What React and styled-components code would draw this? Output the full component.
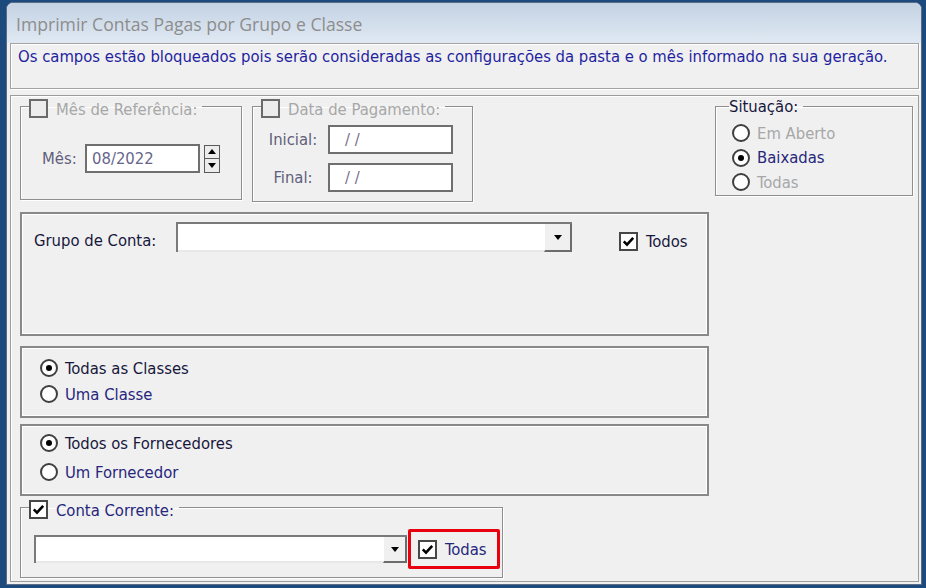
import React from "react";
import styled, { createGlobalStyle } from "styled-components";

const Global = createGlobalStyle`
  html, body { margin: 0; padding: 0; }
  body {
    width: 926px; height: 588px; overflow: hidden;
    background: #1d4a7d;
    font-family: "DejaVu Sans Condensed", "Liberation Sans", sans-serif;
  }
`;

const Screen = styled.div`
  width: 926px; height: 588px; box-sizing: border-box;
  background: #1d4a7d;
  padding: 2px 4px 3px 6px;
  display: flex;
`;

const Window = styled.div`
  flex: 1;
  display: flex; flex-direction: column;
  background: #f0f0f0;
  border: 1px solid #5a6c86;
  border-radius: 7px 7px 0 0;
  overflow: hidden;
`;

const TitleBar = styled.div`
  height: 40px; flex: none;
  display: flex; align-items: center;
  padding: 2px 0 0 9px; box-sizing: border-box;
  background: linear-gradient(#c3d2e3, #e0e9f3);
`;

const TitleText = styled.span`
  font-family: "Open Sans", "Noto Sans", sans-serif;
  font-size: 17.6px; line-height: 22px;
  color: #8d8d8d;
`;

const Body = styled.div`
  flex: 1; display: flex; flex-direction: column;
  padding: 0 2px 2px 3px;
`;

const InfoBox = styled.div`
  height: 46px; box-sizing: border-box; flex: none;
  border: 1px solid #a3a3a3;
  box-shadow: inset 1px 1px 0 #fff, 1px 1px 0 #fff;
  padding: 3px 7px;
  font-size: 16.5px; line-height: 19px;
  color: #1f1fa0;
  white-space: nowrap;
`;

const Panel = styled.div`
  flex: 1; margin-top: 6px;
  border: 1px solid #9c9c9c;
  box-shadow: inset 1px 1px 0 #fff;
  padding: 3px 4px 0 9px;
  display: grid;
  grid-template-columns: 689px 198px;
  column-gap: 6px;
  align-items: start;
`;

const LeftCol = styled.div`
  display: flex; flex-direction: column;
`;

const TopRow = styled.div`
  display: flex; gap: 10px; align-items: flex-start;
`;

const Group = styled.fieldset`
  margin: 0; min-width: 0;
  width: ${p => p.$w}px; box-sizing: border-box;
  border: 1px solid #8e8e8e;
  box-shadow: inset 1px 1px 0 #fff, 1px 1px 0 #fff;
  padding: ${p => p.$pad};
  margin-top: ${p => p.$mt || 0}px;
`;

const Legend = styled.legend`
  padding: 0 5px 0 0;
  margin-left: ${p => p.$ml || 0}px;
`;

const LegendInner = styled.span`
  display: flex; align-items: flex-start; gap: 8px;
  height: 14px;
`;

const Text = styled.span`
  font-size: 16.5px; line-height: 19px; white-space: nowrap;
  margin-top: ${p => p.$mt || 0}px;
  color: ${p =>
    p.$tone === "muted" ? "#a7a7a7" :
    p.$tone === "field" ? "#5f5f7c" :
    p.$tone === "navy" ? "#26267c" :
    "#17173c"};
`;

const FieldRow = styled.div`
  display: flex; align-items: center;
  margin-left: ${p => p.$ml || 0}px;
  & + & { margin-top: ${p => p.$gap || 0}px; }
`;

const FieldLabel = styled(Text)`
  width: ${p => p.$w}px;
  text-align: ${p => p.$align || "left"};
  margin-right: ${p => p.$mr || 0}px;
`;

const TextField = styled.div`
  width: ${p => p.$w}px; height: 29px; box-sizing: border-box;
  border: 2px solid #6f6f6f;
  background: #fff;
  padding-left: ${p => p.$pad}px;
  display: flex; align-items: center;
  font-size: 16.5px; color: ${p => p.$color || "#66668a"};
`;

const Spinner = styled.div`
  display: flex; flex-direction: column;
  width: 16px; height: 28px; box-sizing: border-box;
  border: 1px solid #5a5a5a;
  margin-left: 4px;
`;

const SpinBtn = styled.span`
  flex: 1; display: flex; align-items: center; justify-content: center;
  background: #ececec;
  & + & { border-top: 1px solid #5a5a5a; }
`;

const Arrow = styled.span`
  width: 0; height: 0;
  border-left: ${p => p.$s}px solid transparent;
  border-right: ${p => p.$s}px solid transparent;
  ${p => p.$up
    ? `border-bottom: ${p.$h}px solid #000;`
    : `border-top: ${p.$h}px solid #000;`}
`;

const Box = styled.div`
  height: ${p => p.$h}px; box-sizing: border-box;
  margin-top: ${p => p.$mt}px;
  border: 2px solid #888;
  box-shadow: inset 1px 1px 0 #fff, inset -1px -1px 0 #fff;
  padding: ${p => p.$pad};
`;

const GrupoRow = styled.div`
  display: flex; align-items: flex-start;
`;

const Combo = styled.div`
  display: flex; flex: none;
  width: ${p => p.$w}px; height: ${p => p.$h}px; box-sizing: border-box;
  border-top: 2px solid #7a7a7a; border-left: 2px solid #7a7a7a;
  background: #fff;
  margin-left: ${p => p.$ml || 0}px;
`;

const ComboText = styled.div`
  flex: 1; border-bottom: 2px solid #e8e8e8;
`;

const DropBtn = styled.div`
  width: ${p => p.$w}px; box-sizing: border-box;
  display: flex; align-items: center; justify-content: center;
  background: #f0f0f0;
  border-right: 2px solid #6c6c6c; border-bottom: 2px solid #6c6c6c;
  border-left: 1px solid #fff;
`;

const CheckOption = styled.div`
  display: flex; align-items: center; gap: 8px;
  margin-left: ${p => p.$ml || 0}px;
  margin-top: ${p => p.$mt || 0}px;
`;

const CheckBox = styled.span`
  flex: none;
  width: 19px; height: 19px; box-sizing: border-box;
  border: 2px solid ${p => (p.$disabled ? "#6a6a6a" : "#474747")};
  background: ${p => (p.$disabled ? "#ececec" : "#fff")};
  display: inline-flex; align-items: center; justify-content: center;
`;

const OptionList = styled.div`
  display: flex; flex-direction: column;
  gap: ${p => p.$gap}px;
  padding-left: ${p => p.$pl || 0}px;
`;

const OptionRow = styled.div`
  display: flex; align-items: center; gap: 7px; height: 20px;
`;

const RadioDot = styled.span`
  flex: none; width: 18px; height: 18px; box-sizing: border-box;
  border-radius: 50%;
  border: 2px solid #3f3f3f;
  background: #fff;
  display: inline-flex; align-items: center; justify-content: center;
  &::after {
    content: "";
    width: 6px; height: 6px; border-radius: 50%;
    background: #000;
    display: ${p => (p.$on ? "block" : "none")};
  }
`;

const ContaRow = styled.div`
  display: flex; align-items: center; gap: 1px;
  margin-left: 5px;
`;

const Highlight = styled.div`
  width: 92px; height: 40px; box-sizing: border-box;
  border: 3px solid #e8000e;
  border-radius: 2px;
  display: flex; align-items: center; gap: 8px;
  padding-left: 7px;
`;

function Check({ checked, disabled }) {
  return (
    <CheckBox $disabled={disabled}>
      {checked && (
        <svg width="13" height="13" viewBox="0 0 13 13">
          <path d="M1.8 6.4 L5 9.6 L11.2 2.8" fill="none" stroke="#000" strokeWidth="2.6" />
        </svg>
      )}
    </CheckBox>
  );
}

function Radio({ on, label, tone }) {
  return (
    <OptionRow>
      <RadioDot $on={on} />
      <Text $tone={tone}>{label}</Text>
    </OptionRow>
  );
}

export default function App() {
  return (
    <>
      <Global />
      <Screen>
        <Window>
          <TitleBar>
            <TitleText>Imprimir Contas Pagas por Grupo e Classe</TitleText>
          </TitleBar>
          <Body>
            <InfoBox>
              Os campos estão bloqueados pois serão consideradas as configurações da pasta e o mês informado na sua geração.
            </InfoBox>
            <Panel>
              <LeftCol>
                <TopRow>
                  <Group $w={222} $pad="31px 8px 26px 8px">
                    <Legend>
                      <LegendInner>
                        <Check disabled />
                        <Text $tone="muted" $mt={1}>Mês de Referência:</Text>
                      </LegendInner>
                    </Legend>
                    <FieldRow $ml={13}>
                      <FieldLabel $tone="field" $w={43}>Mês:</FieldLabel>
                      <TextField $w={115} $pad={5}>08/2022</TextField>
                      <Spinner>
                        <SpinBtn><Arrow $up $s={4} $h={5} /></SpinBtn>
                        <SpinBtn><Arrow $s={4} $h={5} /></SpinBtn>
                      </Spinner>
                    </FieldRow>
                  </Group>
                  <Group $w={221} $pad="12px 8px 9px 8px">
                    <Legend>
                      <LegendInner>
                        <Check disabled />
                        <Text $tone="muted" $mt={1}>Data de Pagamento:</Text>
                      </LegendInner>
                    </Legend>
                    <FieldRow $ml={2} $gap={9}>
                      <FieldLabel $tone="field" $w={60} $align="center" $mr={5}>Inicial:</FieldLabel>
                      <TextField $w={125} $pad={15} $color="#7b6f8c">/ /</TextField>
                    </FieldRow>
                    <FieldRow $ml={2} $gap={9}>
                      <FieldLabel $tone="field" $w={60} $align="center" $mr={5}>Final:</FieldLabel>
                      <TextField $w={125} $pad={15} $color="#7b6f8c">/ /</TextField>
                    </FieldRow>
                  </Group>
                </TopRow>

                <Box $h={124} $mt={10} $pad="8px 12px">
                  <GrupoRow>
                    <FieldLabel $w={142} $mt={9}>Grupo de Conta:</FieldLabel>
                    <Combo $w={396} $h={30}>
                      <ComboText />
                      <DropBtn $w={28}><Arrow $s={4.5} $h={5} /></DropBtn>
                    </Combo>
                    <CheckOption $ml={47} $mt={10}>
                      <Check checked />
                      <Text>Todos</Text>
                    </CheckOption>
                  </GrupoRow>
                </Box>

                <Box $h={72} $mt={10} $pad="10px 18px">
                  <OptionList $gap={6}>
                    <Radio on label="Todas as Classes" />
                    <Radio label="Uma Classe" tone="navy" />
                  </OptionList>
                </Box>

                <Box $h={72} $mt={6} $pad="7px 18px">
                  <OptionList $gap={9}>
                    <Radio on label="Todos os Fornecedores" />
                    <Radio label="Um Fornecedor" tone="navy" />
                  </OptionList>
                </Box>

                <Group $w={483} $mt={4} $pad="15px 2px 8px 8px">
                  <Legend>
                    <LegendInner>
                      <Check checked />
                      <Text $tone="navy" $mt={1}>Conta Corrente:</Text>
                    </LegendInner>
                  </Legend>
                  <ContaRow>
                    <Combo $w={373} $h={28}>
                      <ComboText />
                      <DropBtn $w={24}><Arrow $s={4.5} $h={5} /></DropBtn>
                    </Combo>
                    <Highlight>
                      <Check checked />
                      <Text $tone="navy">Todas</Text>
                    </Highlight>
                  </ContaRow>
                </Group>
              </LeftCol>

              <Group $w={198} $pad="10px 8px 3px 13px">
                <Legend>
                  <LegendInner>
                    <Text $mt={-2}>Situação:</Text>
                  </LegendInner>
                </Legend>
                <OptionList $gap={4.5} $pl={3}>
                  <Radio label="Em Aberto" tone="muted" />
                  <Radio on label="Baixadas" tone="navy" />
                  <Radio label="Todas" tone="muted" />
                </OptionList>
              </Group>
            </Panel>
          </Body>
        </Window>
      </Screen>
    </>
  );
}
